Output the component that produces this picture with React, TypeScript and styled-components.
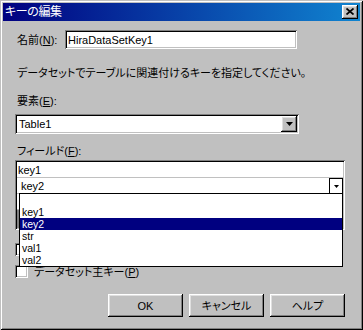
import React from "react"
import styled, { createGlobalStyle } from "styled-components"

const GlobalStyle = createGlobalStyle`
  html, body {
    margin: 0;
    padding: 0;
    background: #c0c0c0;
  }
  body {
    font-family: "Liberation Sans", "Noto Sans CJK JP", sans-serif;
    font-size: 11px;
    font-feature-settings: "palt";
    color: #000000;
  }
`

const raised = `
  background: #c0c0c0;
  box-shadow: inset -1px -1px #000000, inset 1px 1px #ffffff,
    inset -2px -2px #808080, inset 2px 2px #dfdfdf;
`
const sunken = `
  background: #ffffff;
  box-shadow: inset 1px 1px #808080, inset -1px -1px #ffffff,
    inset 2px 2px #000000, inset -2px -2px #c0c0c0;
`

export default function App() {
  const items = ["", "key1", "key2", "str", "val1", "val2"]
  return (
    <>
      <GlobalStyle />
      <Window>
        <TitleBar>
          <TitleText>キーの編集</TitleText>
          <CloseButton aria-label="閉じる">
            <svg width="8" height="7" viewBox="0 0 8 7">
              <path d="M0.5 0.5L7.5 6.5M7.5 0.5L0.5 6.5" stroke="#000" strokeWidth="1.7" />
            </svg>
          </CloseButton>
        </TitleBar>
        <Body>
          <NameRow>
            <Label $width={50}>
              名前(<u>N</u>):
            </Label>
            <TextInput>HiraDataSetKey1</TextInput>
          </NameRow>
          <Description>データセットでテーブルに関連付けるキーを指定してください。</Description>
          <Label $top={16}>
            要素(<u>E</u>):
          </Label>
          <Combo>
            <ComboText>Table1</ComboText>
            <ComboButton>
              <svg width="7" height="4" viewBox="0 0 7 4">
                <polygon points="0,0 7,0 3.5,4" fill="#000" />
              </svg>
            </ComboButton>
          </Combo>
          <Label $top={11}>
            フィールド(<u>F</u>):
          </Label>
          <Grid>
            <GridRow>
              <CellText>key1</CellText>
            </GridRow>
            <GridRow>
              <CellText $edit>key2</CellText>
              <CellButton>
                <svg width="5" height="3" viewBox="0 0 5 3">
                  <polygon points="0,0 5,0 2.5,3" fill="#000" />
                </svg>
              </CellButton>
            </GridRow>
            <GridRow />
            <DropList>
              {items.map((item, i) => (
                <DropItem key={i} $selected={item === "key2"}>
                  {item}
                </DropItem>
              ))}
            </DropList>
          </Grid>
          <CheckRow $top={13}>
            <CheckBox />
          </CheckRow>
          <CheckRow $top={9}>
            <CheckBox />
            <CheckLabel>
              データセット主キー(<u>P</u>)
            </CheckLabel>
          </CheckRow>
          <ButtonBar>
            <Button>OK</Button>
            <Button>キャンセル</Button>
            <Button>ヘルプ</Button>
          </ButtonBar>
        </Body>
      </Window>
    </>
  )
}

const Window = styled.div`
  box-sizing: border-box;
  width: 363px;
  height: 330px;
  padding: 3px;
  background: #c0c0c0;
  box-shadow: inset 1px 1px #c0c0c0, inset -1px -1px #000000,
    inset 2px 2px #ffffff, inset -2px -2px #808080;
  display: flex;
  flex-direction: column;
`
const TitleBar = styled.div`
  height: 18px;
  display: flex;
  align-items: center;
  justify-content: space-between;
  padding: 0 2px;
  background: linear-gradient(to right, #000080, #1084d0);
`
const TitleText = styled.span`
  color: #ffffff;
  font-size: 12px;
  line-height: 14px;
  letter-spacing: -0.4px;
`
const CloseButton = styled.div`
  ${raised}
  width: 16px;
  height: 14px;
  display: flex;
  align-items: center;
  justify-content: center;
  & svg {
    margin-left: -1px;
    margin-top: -1px;
  }
`
const Body = styled.div`
  flex: 1;
  display: flex;
  flex-direction: column;
  align-items: flex-start;
  padding: 9px 15px 0 12px;
`
const NameRow = styled.div`
  display: flex;
  align-items: center;
`
const Label = styled.div<{ $width?: number; $top?: number }>`
  box-sizing: border-box;
  padding-left: 2px;
  margin-top: ${(p) => (p.$top ? p.$top : 0)}px;
  width: ${(p) => (p.$width ? `${p.$width}px` : "auto")};
  line-height: 12px;
  white-space: nowrap;
  & u {
    text-decoration-thickness: 1px;
    text-underline-offset: 1px;
  }
`
const TextInput = styled.div`
  ${sunken}
  box-sizing: border-box;
  width: 232px;
  height: 19px;
  padding: 3px 3px 0 3px;
  line-height: 14px;
`
const Description = styled.div`
  margin-top: 18px;
  padding-left: 2px;
  line-height: 12px;
  white-space: nowrap;
`
const Combo = styled.div`
  ${sunken}
  box-sizing: border-box;
  margin-top: 7px;
  width: 284px;
  height: 20px;
  padding: 2px;
  display: flex;
  align-items: center;
  justify-content: space-between;
`
const ComboText = styled.span`
  padding-left: 2px;
  line-height: 14px;
`
const ComboButton = styled.div`
  ${raised}
  width: 16px;
  height: 16px;
  display: flex;
  align-items: center;
  justify-content: center;
`
const Grid = styled.div`
  position: relative;
  box-sizing: border-box;
  margin-top: 3px;
  width: 330px;
  height: 70px;
  padding: 2px;
  background: #808080;
  box-shadow: inset 1px 1px #808080, inset -1px -1px #ffffff,
    inset 2px 2px #000000, inset -2px -2px #c0c0c0;
`
const GridRow = styled.div`
  box-sizing: border-box;
  height: 16px;
  background: #ffffff;
  border-bottom: 1px solid #c0c0c0;
  display: flex;
  align-items: center;
  justify-content: space-between;
`
const CellText = styled.span<{ $edit?: boolean }>`
  padding-left: ${(p) => (p.$edit ? 4 : 1)}px;
  line-height: 14px;
`
const CellButton = styled.div`
  box-sizing: border-box;
  align-self: flex-end;
  width: 14px;
  height: 15px;
  border: 1px solid #000000;
  border-bottom: none;
  background: #ffffff;
  display: flex;
  align-items: center;
  justify-content: center;
`
const DropList = styled.div`
  position: absolute;
  top: 33px;
  left: 4px;
  box-sizing: border-box;
  width: 324px;
  height: 74px;
  border: 1px solid #000000;
  background: #ffffff;
  z-index: 2;
`
const DropItem = styled.div<{ $selected?: boolean }>`
  height: 12px;
  font-size: 10.5px;
  line-height: 12px;
  padding-left: 2px;
  overflow: hidden;
  background: ${(p) => (p.$selected ? "#000080" : "#ffffff")};
  color: ${(p) => (p.$selected ? "#ffffff" : "#000000")};
`
const CheckRow = styled.div<{ $top: number }>`
  margin-top: ${(p) => p.$top}px;
  display: flex;
  align-items: center;
  gap: 6px;
  height: 13px;
`
const CheckBox = styled.div`
  ${sunken}
  width: 13px;
  height: 13px;
`
const CheckLabel = styled.span`
  line-height: 12px;
  white-space: nowrap;
`
const ButtonBar = styled.div`
  align-self: stretch;
  margin-top: 16px;
  display: flex;
  justify-content: flex-end;
  gap: 6px;
`
const Button = styled.div`
  ${raised}
  width: 75px;
  height: 23px;
  display: flex;
  align-items: center;
  justify-content: center;
  line-height: 12px;
`
